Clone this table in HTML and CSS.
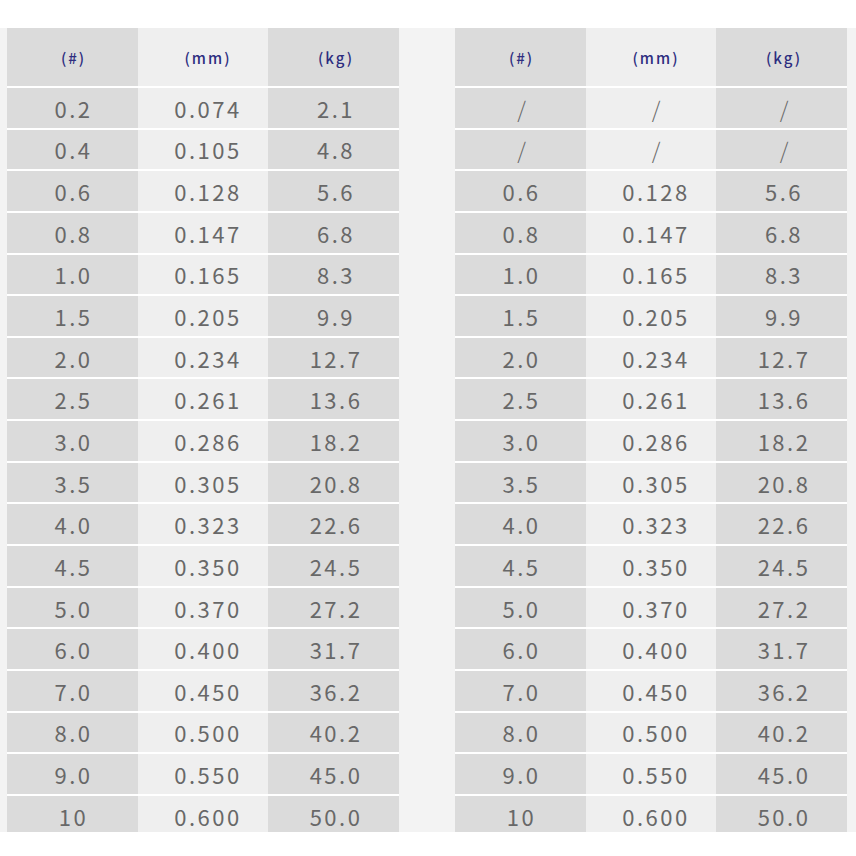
FILE: index.html
```html
<!DOCTYPE html>
<html lang="ja">
<head>
<meta charset="utf-8">
<title>Line spec</title>
<link rel="stylesheet" href="styles.css">
</head>
<body>
<div class="wrap">
  <div class="spec">
    <div class="c d h">(#)</div><div class="c l h">(mm)</div><div class="c r h">(kg)</div>
    <div class="c d">0.2</div><div class="c l">0.074</div><div class="c r">2.1</div>
    <div class="c d">0.4</div><div class="c l">0.105</div><div class="c r">4.8</div>
    <div class="c d">0.6</div><div class="c l">0.128</div><div class="c r">5.6</div>
    <div class="c d">0.8</div><div class="c l">0.147</div><div class="c r">6.8</div>
    <div class="c d">1.0</div><div class="c l">0.165</div><div class="c r">8.3</div>
    <div class="c d">1.5</div><div class="c l">0.205</div><div class="c r">9.9</div>
    <div class="c d">2.0</div><div class="c l">0.234</div><div class="c r">12.7</div>
    <div class="c d">2.5</div><div class="c l">0.261</div><div class="c r">13.6</div>
    <div class="c d">3.0</div><div class="c l">0.286</div><div class="c r">18.2</div>
    <div class="c d">3.5</div><div class="c l">0.305</div><div class="c r">20.8</div>
    <div class="c d">4.0</div><div class="c l">0.323</div><div class="c r">22.6</div>
    <div class="c d">4.5</div><div class="c l">0.350</div><div class="c r">24.5</div>
    <div class="c d">5.0</div><div class="c l">0.370</div><div class="c r">27.2</div>
    <div class="c d">6.0</div><div class="c l">0.400</div><div class="c r">31.7</div>
    <div class="c d">7.0</div><div class="c l">0.450</div><div class="c r">36.2</div>
    <div class="c d">8.0</div><div class="c l">0.500</div><div class="c r">40.2</div>
    <div class="c d">9.0</div><div class="c l">0.550</div><div class="c r">45.0</div>
    <div class="c d">10</div><div class="c l">0.600</div><div class="c r">50.0</div>
  </div>
  <div class="spec">
    <div class="c d h">(#)</div><div class="c l h">(mm)</div><div class="c r h">(kg)</div>
    <div class="c d s">/</div><div class="c l s">/</div><div class="c r s">/</div>
    <div class="c d s">/</div><div class="c l s">/</div><div class="c r s">/</div>
    <div class="c d">0.6</div><div class="c l">0.128</div><div class="c r">5.6</div>
    <div class="c d">0.8</div><div class="c l">0.147</div><div class="c r">6.8</div>
    <div class="c d">1.0</div><div class="c l">0.165</div><div class="c r">8.3</div>
    <div class="c d">1.5</div><div class="c l">0.205</div><div class="c r">9.9</div>
    <div class="c d">2.0</div><div class="c l">0.234</div><div class="c r">12.7</div>
    <div class="c d">2.5</div><div class="c l">0.261</div><div class="c r">13.6</div>
    <div class="c d">3.0</div><div class="c l">0.286</div><div class="c r">18.2</div>
    <div class="c d">3.5</div><div class="c l">0.305</div><div class="c r">20.8</div>
    <div class="c d">4.0</div><div class="c l">0.323</div><div class="c r">22.6</div>
    <div class="c d">4.5</div><div class="c l">0.350</div><div class="c r">24.5</div>
    <div class="c d">5.0</div><div class="c l">0.370</div><div class="c r">27.2</div>
    <div class="c d">6.0</div><div class="c l">0.400</div><div class="c r">31.7</div>
    <div class="c d">7.0</div><div class="c l">0.450</div><div class="c r">36.2</div>
    <div class="c d">8.0</div><div class="c l">0.500</div><div class="c r">40.2</div>
    <div class="c d">9.0</div><div class="c l">0.550</div><div class="c r">45.0</div>
    <div class="c d">10</div><div class="c l">0.600</div><div class="c r">50.0</div>
  </div>
</div>
</body>
</html>
```
FILE: styles.css
```css
html, body {
  margin: 0;
  padding: 0;
  background: #ffffff;
}
body {
  font-family: "Noto Sans CJK JP", "Noto Sans", sans-serif;
}
.wrap {
  margin-top: 28px;
  height: 804px;
  overflow: hidden;
  background: #f3f3f3;
  padding: 0 9px 0 7px;
  display: flex;
  align-items: flex-start;
  gap: 56px;
}
.spec {
  display: grid;
  grid-template-columns: 131px 130px 131px;
  grid-template-rows: 58px repeat(18, 39.65px);
  row-gap: 2px;
  background: #ffffff;
}
.c {
  display: flex;
  align-items: center;
  justify-content: center;
  font-size: 22px;
  line-height: 1;
  color: #686868;
  letter-spacing: 2.5px;
  padding-left: 2px;
}
.d {
  background: #dbdbdb;
}
.l {
  background: #efefef;
  padding-left: 10px;
}
.r {
  background: #dbdbdb;
  padding-left: 5px;
}
.h {
  font-size: 15px;
  font-weight: 500;
  color: #2d2d80;
  letter-spacing: 2px;
}
.s {
  font-weight: 300;
  letter-spacing: 0;
}
```
